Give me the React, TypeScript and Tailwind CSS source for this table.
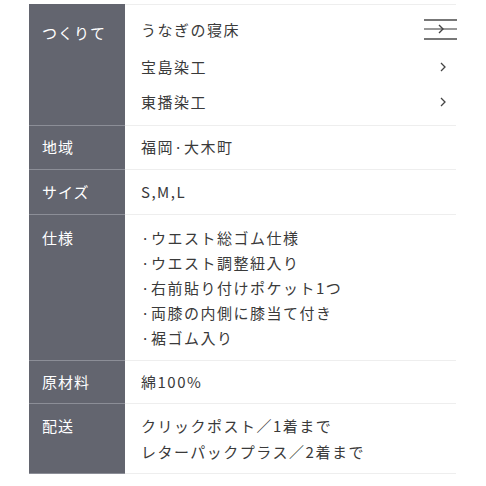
const font = { fontFamily: '"Noto Sans CJK JP", "Noto Sans", sans-serif' };

function Chevron() {
  return (
    <svg width="8" height="12" viewBox="0 0 8 12" className="shrink-0">
      <path d="M2 2 L6 6 L2 10" fill="none" stroke="#444" strokeWidth="1.3" />
    </svg>
  );
}

function MenuArrow() {
  return (
    <svg width="35" height="24" viewBox="0 0 35 24" className="shrink-0 -mr-[2px]">
      <line x1="1" y1="2" x2="34" y2="2" stroke="#777" strokeWidth="2" />
      <line x1="1" y1="11" x2="34" y2="11" stroke="#777" strokeWidth="1.6" />
      <line x1="1" y1="21" x2="34" y2="21" stroke="#777" strokeWidth="2" />
      <path d="M16 7 L20 11 L16 15" fill="none" stroke="#444" strokeWidth="1.4" />
    </svg>
  );
}

type Row = { label: string; h: string; lines: string[]; center?: boolean; pt?: string; lh?: string };

const rows: Row[] = [
  { label: "地域", h: "h-[44px]", lines: ["福岡·大木町"], center: true },
  { label: "サイズ", h: "h-[45px]", lines: ["S,M,L"], center: true },
  {
    label: "仕様",
    h: "h-[146px]",
    pt: "pt-[10px]",
    lh: "leading-[25px]",
    lines: [
      "·ウエスト総ゴム仕様",
      "·ウエスト調整紐入り",
      "·右前貼り付けポケット1つ",
      "·両膝の内側に膝当て付き",
      "·裾ゴム入り",
    ],
  },
  { label: "原材料", h: "h-[43px]", lines: ["綿100%"], center: true },
  {
    label: "配送",
    h: "h-[70px]",
    pt: "pt-[9px]",
    lh: "leading-[26px]",
    lines: ["クリックポスト／1着まで", "レターパックプラス／2着まで"],
  },
];

export default function App() {
  return (
    <div className="w-[486px] h-[486px] bg-white pt-[4px]" style={font}>
      <div className="ml-[29px] w-[427px] flex flex-col">
        {/* つくりて */}
        <div className="flex h-[121px]">
          <div className="w-[96px] shrink-0 bg-[#63656f] pl-[13px] pt-[15px] text-[15px] leading-[28px] text-white tracking-[1px]">
            つくりて
          </div>
          <div className="flex-1 border-t border-[#eeeeee] pl-[16px] pt-[11px] text-[15px] text-[#3a3a3a] tracking-[1.5px]">
            <div className="flex items-center justify-between h-[28px]">
              <span>うなぎの寝床</span>
              <MenuArrow />
            </div>
            <div className="flex items-center justify-between h-[28px] mt-[9px] pr-[9px]">
              <span>宝島染工</span>
              <Chevron />
            </div>
            <div className="flex items-center justify-between h-[28px] mt-[7px] pr-[9px]">
              <span>東播染工</span>
              <Chevron />
            </div>
          </div>
        </div>

        {rows.map((r) => (
          <div key={r.label} className={`flex ${r.h}`}>
            <div
              className={`w-[96px] shrink-0 bg-[#63656f] border-t border-[#8c8e97] pl-[13px] text-[15px] text-white tracking-[1px] ${
                r.center ? "flex items-center" : `${r.pt} ${r.lh}`
              }`}
            >
              {r.label}
            </div>
            <div
              className={`flex-1 border-t border-[#eeeeee] pl-[16px] text-[15px] text-[#3a3a3a] tracking-[1.5px] ${
                r.center ? "flex items-center" : `${r.pt} ${r.lh}`
              }`}
            >
              {r.center ? <span>{r.lines[0]}</span> : r.lines.map((l) => <div key={l}>{l}</div>)}
            </div>
          </div>
        ))}
        <div className="h-px flex">
          <div className="w-[96px] bg-[#8c8e97]" />
          <div className="flex-1 bg-[#eeeeee]" />
        </div>
      </div>
    </div>
  );
}
